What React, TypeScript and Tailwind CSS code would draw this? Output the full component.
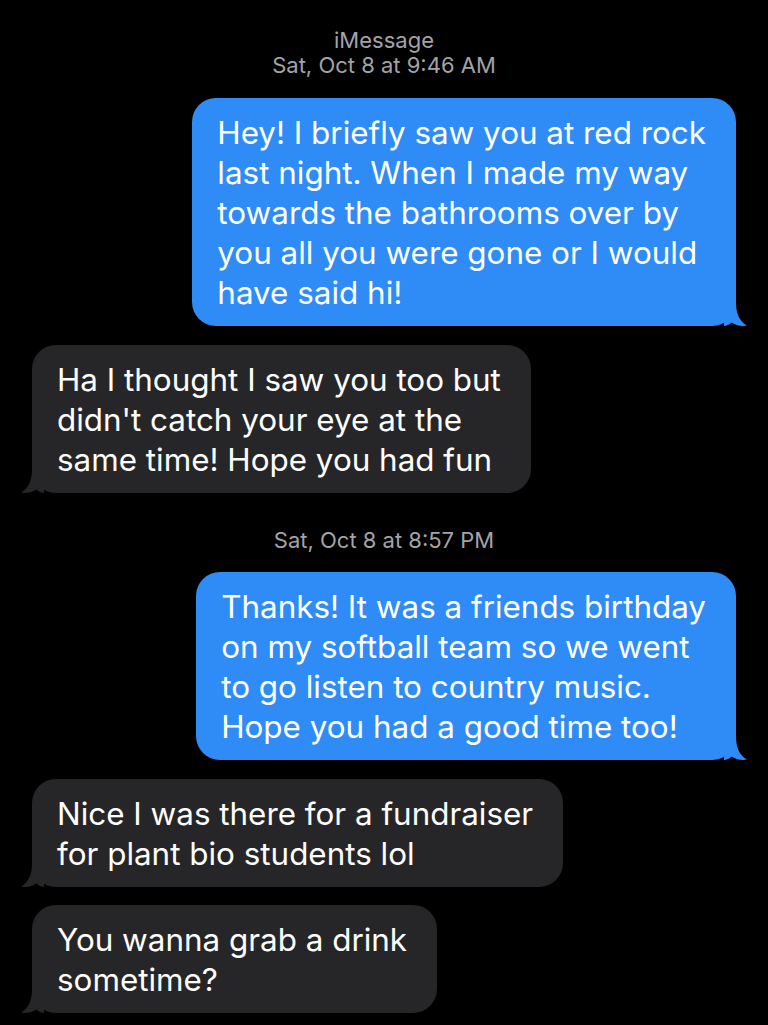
const font = { fontFamily: "Inter, 'Noto Sans', sans-serif" };

function Tail({ side, color }: { side: "left" | "right"; color: string }) {
  // tail drawn for the right side, mirrored for the left
  return (
    <svg
      width="24"
      height="24"
      viewBox="0 0 24 24"
      className={
        side === "right"
          ? "absolute bottom-0 right-[-12px]"
          : "absolute bottom-0 left-[-12px] -scale-x-100"
      }
    >
      <path
        d="M0 0 H12 C12 11 15 19 23 23.6 C17 24.6 11 23 7.5 20.5 C5.5 22.5 2.5 24 0 24 Z"
        fill={color}
      />
    </svg>
  );
}

function Bubble({
  lines,
  mine,
  className,
}: {
  lines: string[];
  mine?: boolean;
  className?: string;
}) {
  const color = mine ? "#2f8cf7" : "#262628";
  return (
    <div className={`flex ${mine ? "justify-end pr-[32px]" : "justify-start pl-[32px]"} ${className ?? ""}`}>
      <div
        className={`relative w-fit rounded-[24px] pl-[25px] pr-[30px] pt-[15px] pb-[13px] text-white text-[31.4px] leading-[40px] ${
          mine ? "bg-[#2f8cf7]" : "bg-[#262628]"
        }`}
      >
        {lines.map((l, i) => (
          <div key={i} className="whitespace-nowrap">
            {l}
          </div>
        ))}
        <Tail side={mine ? "right" : "left"} color={color} />
      </div>
    </div>
  );
}

export default function App() {
  return (
    <main className="w-[768px] h-[1025px] overflow-hidden bg-black" style={font}>
      {/* Header */}
      <div className="pt-[28px] text-center text-[22px] leading-[25px] text-[#a3a3a8]">
        <div>iMessage</div>
        <div>Sat, Oct 8 at 9:46 AM</div>
      </div>

      <Bubble
        mine
        className="mt-[20px]"
        lines={[
          "Hey! I briefly saw you at red rock",
          "last night. When I made my way",
          "towards the bathrooms over by",
          "you all you were gone or I would",
          "have said hi!",
        ]}
      />

      <Bubble
        className="mt-[19px]"
        lines={[
          "Ha I thought I saw you too but",
          "didn't catch your eye at the",
          "same time! Hope you had fun",
        ]}
      />

      <div className="mt-[35px] text-center text-[22px] leading-[25px] text-[#a3a3a8]">
        Sat, Oct 8 at 8:57 PM
      </div>

      <Bubble
        mine
        className="mt-[19px]"
        lines={[
          "Thanks! It was a friends birthday",
          "on my softball team so we went",
          "to go listen to country music.",
          "Hope you had a good time too!",
        ]}
      />

      <Bubble
        className="mt-[19px]"
        lines={["Nice I was there for a fundraiser", "for plant bio students lol"]}
      />

      <Bubble className="mt-[18px]" lines={["You wanna grab a drink", "sometime?"]} />
    </main>
  );
}
